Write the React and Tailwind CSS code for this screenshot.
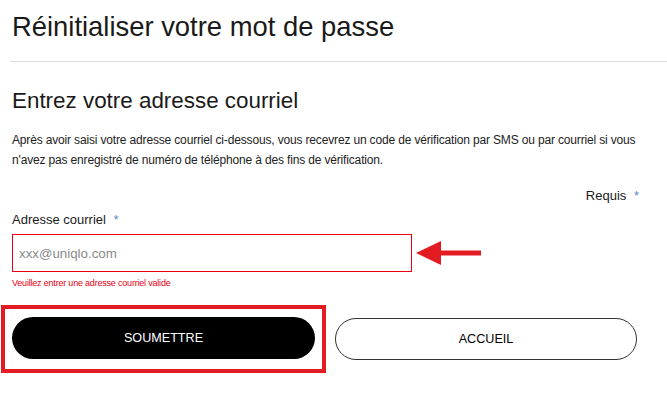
import React from 'react';

const RedArrow = () => (
  <svg width="66" height="24" viewBox="0 0 66 24" className="shrink-0">
    <polygon points="0,12 25,0 25,24" fill="#e31c23" />
    <rect x="24" y="9.5" width="41" height="5" fill="#e31c23" />
  </svg>
);

export default function App() {
  return (
    <div className="min-h-[417px] bg-white pl-3 pt-[11px] text-[#1a1a1a]" style={{ fontFamily: '"Liberation Sans", Arial, sans-serif' }}>
      <h1 className="text-[27.4px] leading-[32px] font-normal">Réinitialiser votre mot de passe</h1>
      <div className="-ml-[2px] mt-[18px] h-px bg-[#dcdcdc]" />

      <div className="pr-[28px]">
        <h2 className="mt-[26px] text-[22.4px] leading-[26px]">Entrez votre adresse courriel</h2>
        <p className="mt-[16px] text-[12px] leading-[20px] tracking-[-0.16px] text-[#222]">
          Après avoir saisi votre adresse courriel ci-dessous, vous recevrez un code de vérification par SMS ou par courriel si vous n'avez pas enregistré de numéro de téléphone à des fins de vérification.
        </p>

        <div className="mt-[17px] text-right text-[13px] leading-[18px]">
          Requis <span className="ml-1 text-[#5a8bc4]">*</span>
        </div>

        <label className="mt-[6px] block text-[13px] leading-[18px]">
          Adresse courriel <span className="ml-1 text-[#5a8bc4]">*</span>
        </label>

        <div className="mt-[5px] flex items-center">
          <input
            type="text"
            placeholder="xxx@uniqlo.com"
            className="h-[38px] w-[400px] border border-[#e60012] px-[6px] text-[13.3px] outline-none placeholder:text-[#8a8a8a]"
          />
          <div className="ml-[4px]">
            <RedArrow />
          </div>
        </div>
        <p className="mt-[5px] text-[9px] leading-[12px] tracking-[-0.2px] text-[#e60012]">Veuillez entrer une adresse courriel valide</p>

        <div className="mt-[16px] flex items-center gap-[9px]">
          <div className="-ml-[11px] border-4 border-[#e31c23] px-[7px] pt-[8px] pb-[10px]">
            <button className="flex h-[42px] w-[303px] items-center justify-center rounded-full bg-black text-[12.6px] text-white">
              SOUMETTRE
            </button>
          </div>
          <button className="flex h-[42px] w-[302px] items-center justify-center rounded-full border border-[#333] bg-white text-[12.6px] text-black">
            ACCUEIL
          </button>
        </div>
      </div>
    </div>
  );
}
